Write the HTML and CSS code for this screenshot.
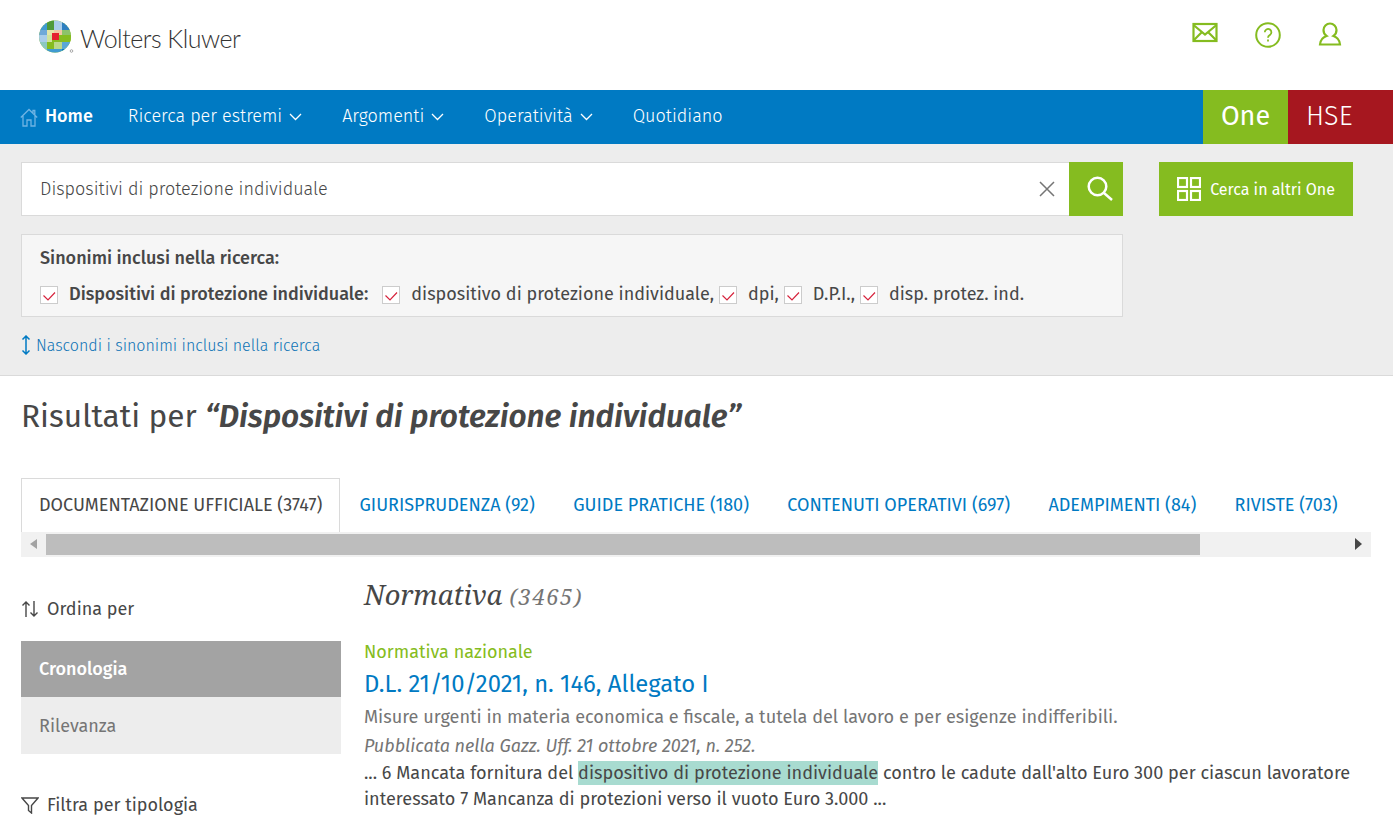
FILE: index.html
```html
<!DOCTYPE html>
<html lang="it">
<head>
    <meta charset="UTF-8">
    <title>Risultati - One HSE</title>
    <link rel="stylesheet" href="styles.css">
</head>
<body>
    <header class="top-header">
        <div class="logo">
            <svg class="logo-mark" width="36" height="36" viewBox="0 0 36 36">
                <defs><clipPath id="globe"><circle cx="17" cy="16.500" r="16"/></clipPath></defs>
                <g clip-path="url(#globe)">
                    <rect width="36" height="36" fill="#85bc20"/>
                    <rect x="0" y="0" width="9" height="10" fill="#409bd2"/>
                    <rect x="9" y="0" width="7" height="10" fill="#4e9a3a"/>
                    <rect x="16" y="0" width="8" height="10" fill="#a9cdea"/>
                    <rect x="24" y="0" width="10" height="10" fill="#2d7fc0"/>
                    <rect x="0" y="10" width="9" height="5" fill="#6fa9d8"/>
                    <rect x="9" y="10" width="7" height="5" fill="#e4e6a8"/>
                    <rect x="16" y="10" width="8" height="5" fill="#f2c7a2"/>
                    <rect x="24" y="10" width="10" height="5" fill="#8cc36a"/>
                    <rect x="0" y="15" width="9" height="7" fill="#a9cdea"/>
                    <rect x="9" y="15" width="5" height="7" fill="#cfe39a"/>
                    <rect x="14" y="13" width="7" height="7" fill="#e5202e"/>
                    <rect x="21" y="15" width="13" height="7" fill="#85bc20"/>
                    <rect x="0" y="22" width="9" height="12" fill="#8cc8c0"/>
                    <rect x="9" y="22" width="7" height="7" fill="#85bc20"/>
                    <rect x="16" y="22" width="8" height="7" fill="#b9d98a"/>
                    <rect x="24" y="22" width="10" height="7" fill="#5aa7d6"/>
                    <rect x="9" y="29" width="15" height="5" fill="#409bd2"/>
                    <rect x="24" y="29" width="10" height="5" fill="#007ac3"/>
                </g>
                <circle cx="33.500" cy="31" r="1.300" fill="none" stroke="#757575" stroke-width=".6"/>
            </svg>
            <span class="logo-text">Wolters Kluwer</span>
        </div>
        <div class="header-icons">
            <svg width="26" height="22" viewBox="0 0 26 22" fill="none" stroke="#85bc20" stroke-width="2.200"><rect x="1.500" y="2" width="23" height="17"/><path d="M1.500 3l11.500 9.500L24.500 3M1.500 18.500l8.500-8.500M24.500 18.500l-8.500-8.500"/></svg>
            <svg width="26" height="26" viewBox="0 0 26 26" fill="none" stroke="#85bc20" stroke-width="2"><circle cx="13" cy="13" r="11.800"/><path d="M9.800 10.300a3.300 3.300 0 1 1 5 2.800c-1.200.8-1.800 1.400-1.800 2.700" stroke-width="1.800"/><path d="M13 17.500v2" stroke-width="1.800"/></svg>
            <svg width="24" height="24" viewBox="0 0 24 24" fill="none" stroke="#85bc20" stroke-width="2.200"><path d="M12 1.500a6.500 6.500 0 0 1 6.500 6.500c0 3-1.500 5-3 6 3 1 6 2.500 6.500 8.500H2c.5-6 3.500-7.500 6.500-8.500-1.500-1-3-3-3-6A6.500 6.500 0 0 1 12 1.500z"/></svg>
        </div>
    </header>

    <nav class="main-nav">
        <ul class="nav-links">
            <li class="nav-home">
                <svg width="18" height="19" viewBox="0 0 18 19" fill="none" stroke="#6fb4e4" stroke-width="1.300"><path d="M.8 9.500L9 1.500l8.200 8M13 5.500V2.500h1.800v4.500M3 8v10h4v-6h4v6h4V8"/></svg>
                Home
            </li>
            <li>Ricerca per estremi <svg class="chevron" width="13" height="8" viewBox="0 0 13 8"><path d="M1 1l5.500 5.500L12 1"/></svg></li>
            <li>Argomenti <svg class="chevron" width="13" height="8" viewBox="0 0 13 8"><path d="M1 1l5.500 5.500L12 1"/></svg></li>
            <li>Operatività <svg class="chevron" width="13" height="8" viewBox="0 0 13 8"><path d="M1 1l5.500 5.500L12 1"/></svg></li>
            <li>Quotidiano</li>
        </ul>
        <div class="nav-brands">
            <span class="brand-one">One</span>
            <span class="brand-hse">HSE</span>
        </div>
    </nav>

    <section class="search-area">
        <div class="search-row">
            <div class="search-box">
                <span class="search-value">Dispositivi di protezione individuale</span>
                <svg class="search-clear" width="16" height="16" viewBox="0 0 16 16"><path d="M1 1l14 14M15 1L1 15"/></svg>
                <button class="search-btn">
                    <svg width="26" height="26" viewBox="0 0 26 26" fill="none" stroke="#fff" stroke-width="2.500"><circle cx="10.500" cy="10.500" r="8.800"/><path d="M17 17l8 7"/></svg>
                </button>
            </div>
            <button class="other-btn">
                <svg width="24" height="24" viewBox="0 0 24 24" fill="none" stroke="#fff" stroke-width="2.200"><rect x="1" y="1" width="9" height="9"/><rect x="14" y="1" width="9" height="9"/><rect x="1" y="14" width="9" height="9"/><rect x="14" y="14" width="9" height="9"/></svg>
                Cerca in altri One
            </button>
        </div>
        <div class="synonyms">
            <div class="synonyms-title">Sinonimi inclusi nella ricerca:</div>
            <div class="synonyms-list">
                <span class="check check-first"><svg viewBox="0 0 18 18" width="18" height="18"><path d="M3.500 9.500l4.500 4.500 7-7.500"/></svg></span>
                <b class="syn-main">Dispositivi di protezione individuale:</b>
                <span class="check check-gap"><svg viewBox="0 0 18 18" width="18" height="18"><path d="M3.500 9.500l4.500 4.500 7-7.500"/></svg></span>
                <span class="syn">dispositivo di protezione individuale,</span>
                <span class="check"><svg viewBox="0 0 18 18" width="18" height="18"><path d="M3.500 9.500l4.500 4.500 7-7.500"/></svg></span>
                <span class="syn">dpi,</span>
                <span class="check"><svg viewBox="0 0 18 18" width="18" height="18"><path d="M3.500 9.500l4.500 4.500 7-7.500"/></svg></span>
                <span class="syn">D.P.I.,</span>
                <span class="check"><svg viewBox="0 0 18 18" width="18" height="18"><path d="M3.500 9.500l4.500 4.500 7-7.500"/></svg></span>
                <span class="syn">disp. protez. ind.</span>
            </div>
        </div>
        <a class="hide-link" href="#">
            <svg width="10" height="20" viewBox="0 0 10 20" fill="none" stroke="#007ac3" stroke-width="1.500"><path d="M5 1v18M1.500 4.500L5 1l3.500 3.500M1.500 15.500L5 19l3.500-3.500"/></svg>
            Nascondi i sinonimi inclusi nella ricerca
        </a>
    </section>

    <h1 class="results-title">Risultati per <em>“Dispositivi di protezione individuale”</em></h1>

    <div class="tabs">
        <a class="tab tab-active">DOCUMENTAZIONE UFFICIALE (3747)</a>
        <a class="tab">GIURISPRUDENZA (92)</a>
        <a class="tab">GUIDE PRATICHE (180)</a>
        <a class="tab">CONTENUTI OPERATIVI (697)</a>
        <a class="tab">ADEMPIMENTI (84)</a>
        <a class="tab">RIVISTE (703)</a>
    </div>
    <div class="tabs-scroll">
        <span class="arrow-left"></span>
        <div class="scroll-track"><div class="scroll-thumb"></div></div>
        <span class="arrow-right"></span>
    </div>

    <div class="content">
        <aside class="sidebar">
            <div class="side-title side-title-sort">
                <svg width="18" height="18" viewBox="0 0 18 18" fill="none" stroke="#474747" stroke-width="1.400"><path d="M5 17V2M1.500 5.500L5 2l3.500 3.500M13 1v15M9.500 12.500L13 16l3.500-3.500"/></svg>
                Ordina per
            </div>
            <div class="sort-item sort-active">Cronologia</div>
            <div class="sort-item">Rilevanza</div>
            <div class="side-title side-title-filter">
                <svg width="18" height="18" viewBox="0 0 18 18" fill="none" stroke="#474747" stroke-width="1.400"><path d="M1 2h16l-6.500 7.500V17l-3-2.500v-5z"/></svg>
                Filtra per tipologia
            </div>
        </aside>
        <main class="results">
            <h2 class="group-title">Normativa <span>(3465)</span></h2>
            <div class="doc-type">Normativa nazionale</div>
            <a class="doc-title" href="#">D.L. 21/10/2021, n. 146, Allegato I</a>
            <p class="doc-desc">Misure urgenti in materia economica e fiscale, a tutela del lavoro e per esigenze indifferibili.</p>
            <p class="doc-pub">Pubblicata nella Gazz. Uff. 21 ottobre 2021, n. 252.</p>
            <p class="doc-snippet">... 6 Mancata fornitura del <mark>dispositivo di protezione individuale</mark> contro le cadute dall'alto Euro 300 per ciascun lavoratore interessato 7 Mancanza di protezioni verso il vuoto Euro 3.000 ...</p>
        </main>
    </div>
</body>
</html>
```

FILE: styles.css
```css
* {
    box-sizing: border-box;
}
html, body {
    height: 827px;
    overflow: hidden;
}
body {
    margin: 0;
    font-family: "Fira Sans", "Open Sans", "Noto Sans", sans-serif;
    font-size: 18px;
    color: #474747;
    background: #fff;
}
.top-header {
    height: 90px;
    display: flex;
    justify-content: space-between;
    padding: 20px 51px 0 38px;
}
.logo {
    display: flex;
    align-items: flex-start;
    gap: 6px;
}
.logo-text {
    font-family: "Lato", sans-serif;
    font-size: 25px;
    font-weight: 300;
    line-height: 36px;
    color: #333;
    letter-spacing: -0.5px;
}
.header-icons {
    display: flex;
    gap: 37px;
    align-items: flex-start;
    padding-top: 2px;
}
.main-nav {
    height: 54px;
    background: #007ac3;
    display: flex;
    justify-content: space-between;
    color: #fff;
}
.nav-links {
    list-style: none;
    margin: 0;
    padding: 0 0 3px 20px;
    display: flex;
    align-items: center;
    gap: 36px;
    font-weight: 300;
}
.nav-links li {
    display: flex;
    align-items: center;
    gap: 7px;
}
.nav-links .nav-home {
    font-weight: 500;
    margin-right: -1px;
}
.nav-home svg {
    margin-top: 3px;
}
.chevron {
    fill: none;
    stroke: #fff;
    stroke-width: 1.300;
    margin-top: 3px;
    margin-right: 4px;
}
.nav-brands {
    display: flex;
    font-size: 27px;
}
.brand-one {
    width: 85px;
    background: #85bc20;
    display: flex;
    align-items: center;
    justify-content: center;
    padding-bottom: 2px;
}
.brand-hse {
    width: 105px;
    background: #a6171f;
    display: flex;
    align-items: center;
    padding: 0 0 2px 18px;
    font-weight: 300;
}
.search-area {
    height: 232px;
    background: #ededed;
    border-bottom: 1px solid #dadada;
    padding: 18px 21px 0;
}
.search-row {
    display: flex;
    gap: 36px;
}
.search-box {
    width: 1102px;
    height: 54px;
    background: #fff;
    border: 1px solid #dadada;
    border-right: 0;
    display: flex;
    align-items: center;
    padding-left: 18px;
}
.search-value {
    flex: 1;
    font-weight: 300;
}
.search-clear {
    fill: none;
    stroke: #757575;
    stroke-width: 1.500;
    margin-right: 14px;
}
.search-btn {
    width: 54px;
    height: 54px;
    border: 0;
    background: #85bc20;
    display: flex;
    align-items: center;
    justify-content: center;
    padding: 0 0 0 7px;
}
.other-btn {
    width: 194px;
    height: 54px;
    border: 0;
    background: #85bc20;
    color: #fff;
    font-family: inherit;
    font-size: 16px;
    font-weight: 400;
    display: flex;
    align-items: center;
    justify-content: center;
    gap: 9px;
    padding: 0;
}
.synonyms {
    width: 1102px;
    height: 83px;
    margin-top: 18px;
    background: #f6f6f6;
    border: 1px solid #dadada;
    padding: 11px 18px 0;
}
.synonyms-title {
    font-weight: 500;
    line-height: 24px;
}
.synonyms-list {
    display: flex;
    align-items: center;
    margin-top: 12px;
    height: 24px;
}
.check {
    width: 18px;
    height: 18px;
    background: #fff;
    border: 1px solid #ccc;
    margin: 2px 10px 0 0;
    flex: none;
    position: relative;
}
.check-first {
    margin-right: 11px;
}
.check svg {
    position: absolute;
    left: -1px;
    top: -1px;
    fill: none;
    stroke: #d6233c;
    stroke-width: 1.200;
}
.check-gap {
    margin-left: 14px;
}
.syn-main {
    font-weight: 500;
}
.syn {
    margin-right: 5px;
    margin-left: 1px;
}
.hide-link {
    display: flex;
    align-items: center;
    gap: 5px;
    margin-top: 18px;
    color: #0b72b5;
    font-size: 16px;
    font-weight: 300;
    text-decoration: none;
}
.results-title {
    margin: 0;
    padding: 20px 21px 0;
    height: 102px;
    font-size: 31.600px;
    font-weight: 400;
    line-height: 40px;
}
.results-title em {
    font-weight: 600;
}
.tabs {
    display: flex;
    padding-left: 21px;
    height: 54px;
}
.tab {
    padding: 0 19.200px;
    height: 54px;
    line-height: 55px;
    color: #007ac3;
    white-space: nowrap;
}
.tab-active {
    color: #474747;
    background: #fff;
    border: 1px solid #dadada;
    border-bottom: 0;
    padding: 0 17px;
    line-height: 53px;
}
.tabs-scroll {
    margin: 0 22px 0 21px;
    height: 25px;
    background: #f1f1f1;
    display: flex;
    align-items: center;
}
.arrow-left, .arrow-right {
    width: 25px;
    flex: none;
    height: 25px;
    position: relative;
}
.arrow-left::before {
    content: "";
    position: absolute;
    left: 9px;
    top: 7px;
    border: 5px solid transparent;
    border-left: 0;
    border-right: 7px solid #a3a3a3;
}
.arrow-right::before {
    content: "";
    position: absolute;
    right: 9px;
    top: 6px;
    border: 6px solid transparent;
    border-right: 0;
    border-left: 7px solid #474747;
}
.scroll-track {
    flex: 1;
    height: 25px;
}
.scroll-thumb {
    width: 1154px;
    height: 21px;
    margin-top: 2px;
    background: #bdbdbd;
}
.content {
    display: flex;
    padding: 0 21px;
    gap: 23px;
}
.sidebar {
    width: 320px;
    flex: none;
}
.side-title {
    display: flex;
    align-items: center;
    gap: 8px;
    height: 24px;
}
.side-title-sort {
    margin-top: 40px;
}
.side-title-filter {
    margin-top: 39px;
}
.sort-item {
    height: 57px;
    background: #ededed;
    color: #757575;
    padding-left: 18px;
    display: flex;
    align-items: center;
}
.sort-active {
    margin-top: 20px;
    height: 56px;
    background: #a3a3a3;
    color: #fff;
    font-weight: 500;
}
.results {
    flex: 1;
    padding-top: 22px;
}
.group-title {
    margin: 0;
    font-family: "Noto Serif", "DejaVu Serif", serif;
    font-size: 27.300px;
    font-style: italic;
    font-weight: 400;
    line-height: 32px;
}
.group-title span {
    color: #757575;
    font-size: 22px;
    letter-spacing: 1.500px;
}
.doc-type {
    margin-top: 28px;
    color: #85bc20;
    line-height: 24px;
}
.doc-title {
    display: block;
    color: #007ac3;
    font-size: 23.800px;
    line-height: 32px;
    margin-top: 4px;
    text-decoration: none;
}
.doc-desc {
    margin: 3px 0 0;
    color: #757575;
    font-size: 18.100px;
    line-height: 28px;
}
.doc-pub {
    margin: 2px 0 0;
    color: #757575;
    font-style: italic;
    line-height: 26px;
}
.doc-snippet {
    margin: 1px 0 0;
    font-size: 18.100px;
    line-height: 26px;
}
mark {
    background: #a8dbd0;
    color: inherit;
    padding: 1px 0;
}
```
